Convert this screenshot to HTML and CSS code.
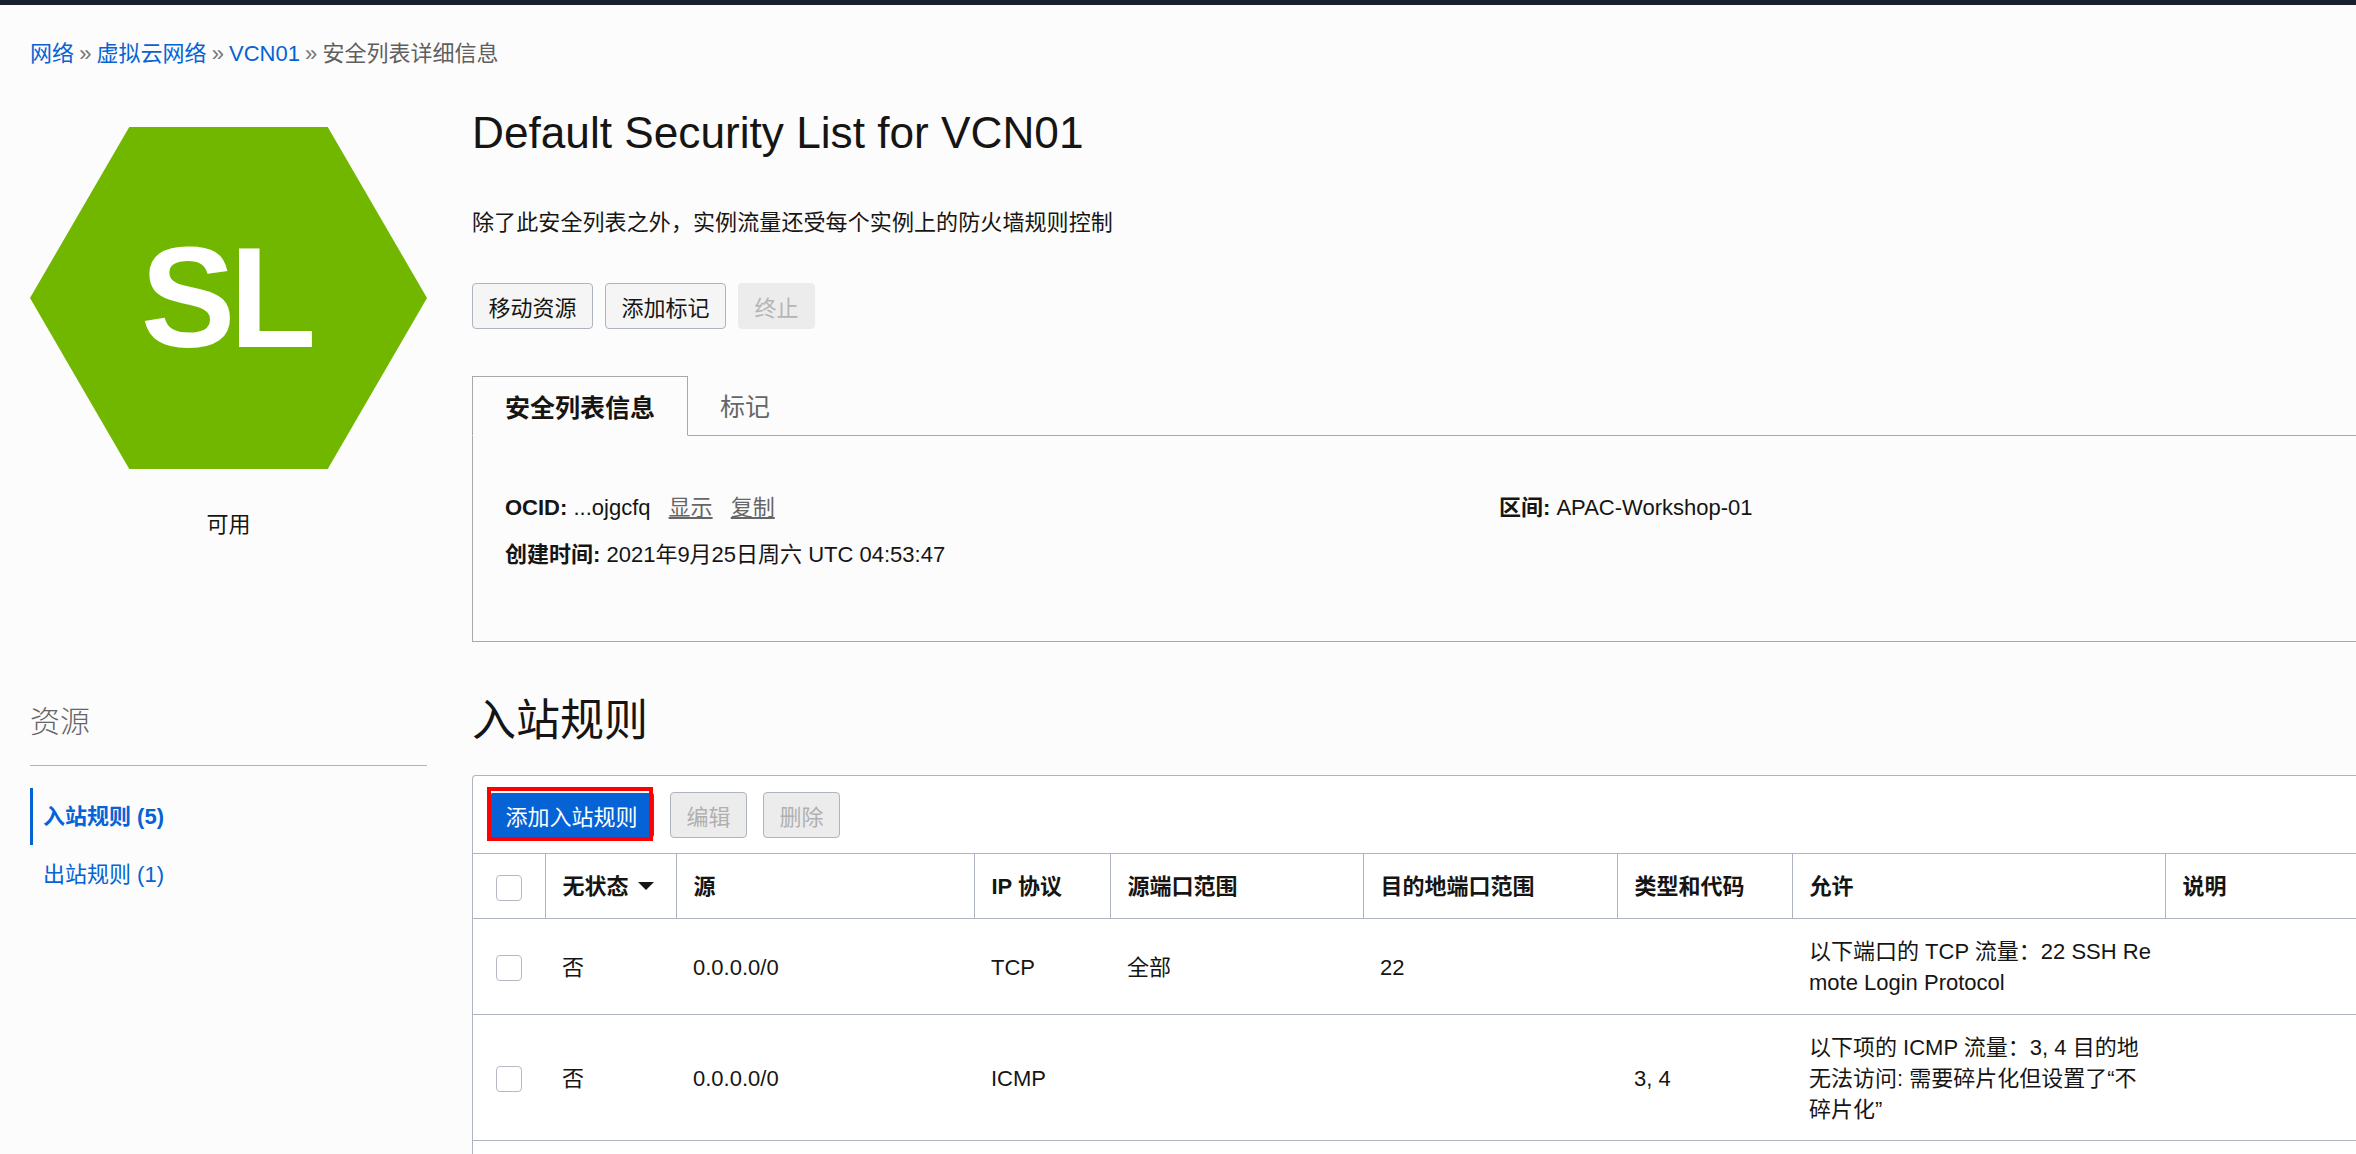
FILE: index.html
```html
<!DOCTYPE html>
<html lang="zh">
<head>
    <meta charset="UTF-8">
    <title>Default Security List for VCN01</title>
    <link rel="stylesheet" href="styles.css">
</head>
<body>
    <div class="topbar"></div>
    <nav class="breadcrumb">
        <a href="#">网络</a> <span class="sep">»</span>
        <a href="#">虚拟云网络</a> <span class="sep">»</span>
        <a href="#">VCN01</a> <span class="sep">»</span>
        <span>安全列表详细信息</span>
    </nav>

    <div class="page">
        <div class="badge-col">
            <div class="hexagon">SL</div>
            <div class="status">可用</div>
        </div>

        <div class="details">
            <h1>Default Security List for VCN01</h1>
            <p class="desc">除了此安全列表之外，实例流量还受每个实例上的防火墙规则控制</p>
            <div class="actions">
                <button class="btn">移动资源</button>
                <button class="btn">添加标记</button>
                <button class="btn btn-off-plain">终止</button>
            </div>
            <div class="tabs">
                <div class="tab active">安全列表信息</div>
                <div class="tab">标记</div>
            </div>
            <div class="info">
                <div class="info-col">
                    <p><b>OCID:</b> ...ojgcfq <a class="plain" href="#">显示</a> <a class="plain" href="#">复制</a></p>
                    <p><b>创建时间:</b> 2021年9月25日周六 UTC 04:53:47</p>
                </div>
                <div class="info-col">
                    <p><b>区间:</b> APAC-Workshop-01</p>
                </div>
            </div>
        </div>

        <aside class="resources">
            <h3>资源</h3>
            <ul>
                <li class="current"><a href="#">入站规则 (5)</a></li>
                <li><a href="#">出站规则 (1)</a></li>
            </ul>
        </aside>

        <section class="rules">
            <h2>入站规则</h2>
            <div class="panel">
                <div class="toolbar">
                    <button class="btn btn-primary">添加入站规则<span class="highlight"></span></button>
                    <button class="btn btn-off">编辑</button>
                    <button class="btn btn-off">删除</button>
                </div>
                <table>
                    <colgroup>
                        <col class="c-check"><col class="c-state"><col class="c-source"><col class="c-proto">
                        <col class="c-sport"><col class="c-dport"><col class="c-type"><col class="c-allow"><col class="c-note">
                    </colgroup>
                    <thead>
                        <tr>
                            <th class="check"><span class="box"></span></th>
                            <th>无状态 <span class="caret"></span></th>
                            <th>源</th>
                            <th>IP 协议</th>
                            <th>源端口范围</th>
                            <th>目的地端口范围</th>
                            <th>类型和代码</th>
                            <th>允许</th>
                            <th>说明</th>
                        </tr>
                    </thead>
                    <tbody>
                        <tr>
                            <td class="check"><span class="box"></span></td>
                            <td>否</td>
                            <td>0.0.0.0/0</td>
                            <td>TCP</td>
                            <td>全部</td>
                            <td>22</td>
                            <td></td>
                            <td>以下端口的 TCP 流量：22 SSH Remote Login Protocol</td>
                            <td></td>
                        </tr>
                        <tr>
                            <td class="check"><span class="box"></span></td>
                            <td>否</td>
                            <td>0.0.0.0/0</td>
                            <td>ICMP</td>
                            <td></td>
                            <td></td>
                            <td>3, 4</td>
                            <td>以下项的 ICMP 流量：3, 4 目的地无法访问: 需要碎片化但设置了“不碎片化”</td>
                            <td></td>
                        </tr>
                    </tbody>
                </table>
            </div>
        </section>
    </div>
</body>
</html>
```

FILE: styles.css
```css
html, body {
    margin: 0;
    height: 100%;
    overflow: hidden;
}

body {
    display: flex;
    flex-direction: column;
    background-color: #fcfcfc;
    color: #161513;
    font-family: "Liberation Sans", "Noto Sans CJK SC", sans-serif;
    font-size: 22px;
    line-height: 32px;
}

a {
    color: #0563d6;
    text-decoration: none;
}

p {
    margin: 0;
}

.topbar {
    height: 5px;
    background-color: #18212e;
}

.breadcrumb {
    padding: 33px 30px 0;
    color: #5f5f5f;
    word-spacing: -1px;
}

.sep {
    color: #777;
}

.page {
    flex: 1;
    min-height: 0;
    display: grid;
    grid-template-columns: 397px 2000px;
    grid-template-rows: auto 1fr;
    column-gap: 45px;
    padding-left: 30px;
    overflow: hidden;
}

/* hexagon and state */
.badge-col {
    padding-top: 57px;
}

.hexagon {
    display: flex;
    align-items: center;
    justify-content: center;
    height: 342px;
    padding-right: 6px;
    box-sizing: border-box;
    background-color: #71b700;
    clip-path: polygon(25% 0, 75% 0, 100% 50%, 75% 100%, 25% 100%, 0 50%);
    color: #fff;
    font-size: 142px;
    font-weight: bold;
    letter-spacing: -6px;
}

.status {
    margin-top: 40px;
    text-align: center;
}

/* details */
h1 {
    margin: 33px 0 0;
    font-size: 44.2px;
    font-weight: normal;
    line-height: 60px;
}

.desc {
    margin-top: 44px;
    letter-spacing: 0.1px;
}

.actions {
    display: flex;
    gap: 12px;
    margin-top: 44px;
}

.btn {
    height: 46px;
    padding: 0 15.5px;
    border: 1px solid #aeb3c1;
    border-radius: 4px;
    background-color: #f5f5f5;
    color: #161513;
    font-family: inherit;
    font-size: 22px;
}

.btn-off-plain {
    border-color: #ececec;
    background-color: #ececec;
    color: #b5b5b5;
}

.btn-off {
    background-color: #ececec;
    color: #b0b0b0;
}

.btn-primary {
    position: relative;
    border-color: #0563d6;
    border-top-color: #fff;
    background-color: #0563d6;
    color: #fff;
}

/* red box someone drew over the screenshot */
.highlight {
    position: absolute;
    top: -6px;
    right: 0;
    bottom: -4px;
    left: -3px;
    border: 4px solid #f00;
}

.tabs {
    display: flex;
    margin-top: 47px;
    border-bottom: 1px solid #a8a8a8;
}

.tab {
    padding: 15px 32px 11px;
    color: #666;
    font-size: 25px;
}

.tab.active {
    margin-bottom: -1px;
    border: 1px solid #a8a8a8;
    border-bottom: 1px solid #fcfcfc;
    color: #161513;
    font-weight: bold;
}

.info {
    display: flex;
    height: 206px;
    padding-top: 56px;
    box-sizing: border-box;
    border: 1px solid #a8a8a8;
    border-top: 0;
}

.info-col {
    display: flex;
    flex-direction: column;
    gap: 15px;
    width: 994px;
    padding-left: 32px;
    box-sizing: border-box;
}

.plain {
    margin-left: 12px;
    color: #666;
    text-decoration: underline;
}

/* left menu */
.resources h3 {
    margin: 60px 0 0;
    padding-bottom: 23px;
    border-bottom: 1px solid #aeb3c1;
    color: #666;
    font-size: 30px;
    font-weight: 300;
    line-height: 40px;
}

.resources ul {
    margin: 22px 0 0;
    padding: 0;
    list-style: none;
}

.resources li {
    height: 57px;
    margin-bottom: 1px;
    padding-left: 10px;
    border-left: 3px solid transparent;
    line-height: 58px;
}

.resources li.current {
    border-left-color: #0563d6;
    font-weight: bold;
}

/* rules table */
.rules {
    display: flex;
    flex-direction: column;
    min-height: 0;
}

.rules h2 {
    margin: 49px 0 0;
    font-size: 44px;
    font-weight: normal;
    line-height: 60px;
}

.panel {
    flex: 1;
    margin-top: 24px;
    border: 1px solid #aeb3c1;
    border-bottom: 0;
    border-radius: 4px 0 0 0;
    background-color: #fff;
}

.toolbar {
    display: flex;
    gap: 16px;
    height: 77px;
    padding: 16px 0 0 16px;
    box-sizing: border-box;
}

table {
    width: 100%;
    table-layout: fixed;
    border-collapse: collapse;
}

.c-check { width: 72px; }
.c-state { width: 131px; }
.c-source { width: 298px; }
.c-proto { width: 136px; }
.c-sport { width: 253px; }
.c-dport { width: 254px; }
.c-type { width: 175px; }
.c-allow { width: 373px; }

th, td {
    padding: 17px 14px 15px 17px;
    text-align: left;
    word-break: break-all;
}

th {
    height: 64px;
    box-sizing: border-box;
    border-top: 1px solid #aeb3c1;
    border-left: 1px solid #aeb3c1;
    border-bottom: 1px solid #aeb3c1;
}

th:first-child {
    border-left: 0;
}

td {
    border-bottom: 1px solid #aeb3c1;
    line-height: 31.3px;
}

th.check, td.check {
    padding: 3px 0 0 23px;
}

.box {
    display: block;
    width: 24px;
    height: 24px;
    border: 1px solid #b5b9c6;
    border-radius: 4px;
    background-color: #fff;
}

.caret {
    display: inline-block;
    margin-left: 3px;
    border-top: 8px solid #161513;
    border-right: 8px solid transparent;
    border-left: 8px solid transparent;
    vertical-align: 4px;
}
```
